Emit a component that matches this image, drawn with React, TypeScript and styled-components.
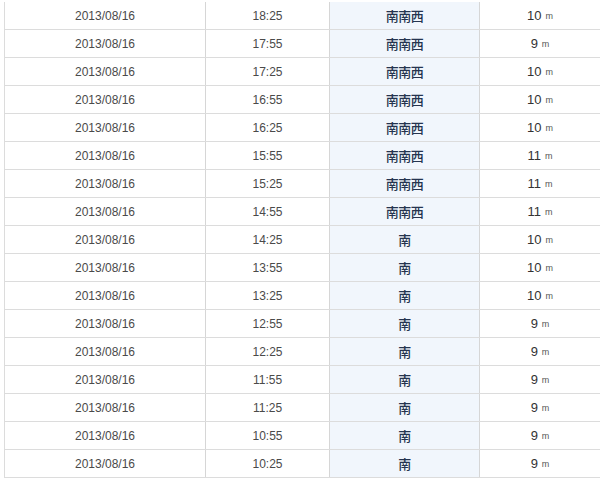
import React from 'react';
import styled, { createGlobalStyle } from 'styled-components';

const GlobalStyle = createGlobalStyle`
  html, body {
    margin: 0;
    padding: 0;
    background: #fff;
  }
  body {
    font-family: "Liberation Sans", Arial, "Noto Sans CJK JP", sans-serif;
  }
`;

const Wrapper = styled.div`
  width: 600px;
  height: 478px;
  overflow: hidden;
  padding: 2px 0 0 4px;
  box-sizing: border-box;
`;

const Table = styled.div`
  display: flex;
  flex-direction: column;
  border-left: 1px solid #dcdcdc;
`;

const Row = styled.div`
  display: grid;
  grid-template-columns: 201px 124px 150px 1fr;
  height: 28px;
  box-sizing: border-box;
  border-bottom: 1px solid #dcdcdc;
`;

const Cell = styled.div<{ $accent?: boolean; $last?: boolean }>`
  display: flex;
  align-items: center;
  justify-content: center;
  border-right: ${(p) => (p.$last ? 'none' : '1px solid #d6d6d6')};
  background: ${(p) => (p.$accent ? '#f1f6fc' : '#fff')};
  font-size: 12px;
  color: #4a4a4a;
`;

const Direction = styled.span`
  font-family: "Noto Sans CJK JP", sans-serif;
  font-size: 13px;
  font-weight: 500;
  color: #25344f;
  letter-spacing: -0.5px;
`;

const Speed = styled.span`
  font-size: 13px;
  color: #333;
`;

const Unit = styled.span`
  font-size: 9px;
  color: #555;
  margin-left: 4px;
`;

interface Wind {
  readonly time: string;
  readonly dir: string;
  readonly speed: number;
}

const rows: Wind[] = [
  { time: '18:25', dir: '南南西', speed: 10 },
  { time: '17:55', dir: '南南西', speed: 9 },
  { time: '17:25', dir: '南南西', speed: 10 },
  { time: '16:55', dir: '南南西', speed: 10 },
  { time: '16:25', dir: '南南西', speed: 10 },
  { time: '15:55', dir: '南南西', speed: 11 },
  { time: '15:25', dir: '南南西', speed: 11 },
  { time: '14:55', dir: '南南西', speed: 11 },
  { time: '14:25', dir: '南', speed: 10 },
  { time: '13:55', dir: '南', speed: 10 },
  { time: '13:25', dir: '南', speed: 10 },
  { time: '12:55', dir: '南', speed: 9 },
  { time: '12:25', dir: '南', speed: 9 },
  { time: '11:55', dir: '南', speed: 9 },
  { time: '11:25', dir: '南', speed: 9 },
  { time: '10:55', dir: '南', speed: 9 },
  { time: '10:25', dir: '南', speed: 9 },
];

export default function App() {
  return (
    <>
      <GlobalStyle />
      <Wrapper>
        <Table>
          {rows.map((r) => (
            <Row key={r.time}>
              <Cell>2013/08/16</Cell>
              <Cell>{r.time}</Cell>
              <Cell $accent>
                <Direction>{r.dir}</Direction>
              </Cell>
              <Cell $last>
                <Speed>{r.speed}</Speed>
                <Unit>m</Unit>
              </Cell>
            </Row>
          ))}
        </Table>
      </Wrapper>
    </>
  );
}
